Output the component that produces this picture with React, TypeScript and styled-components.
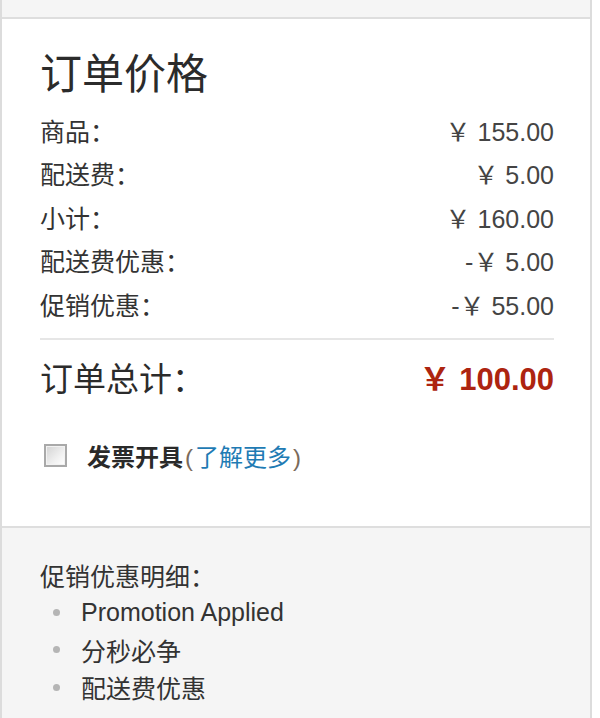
import React from "react";
import styled, { createGlobalStyle } from "styled-components";

const Global = createGlobalStyle`
  html, body { margin: 0; padding: 0; background: #fff; }
  body { font-family: "Liberation Sans", Arial, "Noto Sans CJK SC", sans-serif; color: #333; }
`;

const Frame = styled.div`
  width: 592px;
  box-sizing: border-box;
  border-left: 2px solid #dcdcdc;
  border-right: 2px solid #dcdcdc;
  min-height: 718px;
  background: #f5f5f5;
`;

const TopBand = styled.div`
  height: 17px;
  background: #f5f5f5;
  border-bottom: 2px solid #dedede;
`;

const PriceSection = styled.section`
  background: #fff;
  padding: 29px 36px 50px 38px;
  border-bottom: 2px solid #dedede;
`;

const Title = styled.h2`
  margin: 0 0 14px;
  font-family: "Noto Sans CJK SC", sans-serif;
  font-weight: 400;
  font-size: 42px;
  line-height: 46px;
  color: #2b2b2b;
`;

const Row = styled.div`
  display: flex;
  justify-content: space-between;
  align-items: center;
  height: 43.5px;
  font-size: 25px;
  color: #333;
`;

const Label = styled.span`
  font-family: "Noto Sans CJK SC", sans-serif;
`;

const Amount = styled.span<{ $red?: boolean }>`
  font-family: "Liberation Sans", Arial, "Noto Sans CJK SC", sans-serif;
  color: ${(p) => (p.$red ? "#ad2410" : "#444")};
  font-weight: ${(p) => (p.$red ? 700 : 400)};
  font-size: ${(p) => (p.$red ? "31px" : "25px")};
`;

const Divider = styled.hr`
  border: 0;
  border-top: 2px solid #e6e6e6;
  margin: 12px 0 0;
`;

const TotalRow = styled(Row)`
  height: 60px;
  margin-top: 7px;
  font-size: 33px;
`;

const TotalLabel = styled(Label)`
  color: #2b2b2b;
`;

const InvoiceRow = styled.label`
  display: flex;
  align-items: center;
  height: 40px;
  margin-top: 29px;
  padding-left: 4px;
  gap: 20px;
  font-family: "Noto Sans CJK SC", sans-serif;
  font-size: 24px;
`;

const CheckBox = styled.span`
  width: 23px;
  height: 23px;
  box-sizing: border-box;
  border: 2px solid #a9a9a9;
  background: linear-gradient(135deg, #d2d2d2 0%, #f0f0f0 60%, #ffffff 100%);
  box-shadow: inset 0 0 0 1px #f2f2f2;
`;

const InvoiceText = styled.span`
  font-weight: 700;
  color: #2a2a2a;
`;

const Paren = styled.span`
  font-weight: 400;
  color: #7a6a5a;
  font-family: "Liberation Sans", Arial, sans-serif;
  margin: 0 2px;
`;

const Link = styled.a`
  color: #1f7bb4;
  font-weight: 400;
  text-decoration: none;
`;

const PromoSection = styled.section`
  background: #f5f5f5;
  padding: 29px 38px 20px 38px;
`;

const PromoTitle = styled.div`
  font-family: "Noto Sans CJK SC", sans-serif;
  font-size: 25px;
  line-height: 37px;
  color: #333;
`;

const List = styled.ul`
  list-style: none;
  margin: 0;
  padding: 0;
`;

const Item = styled.li`
  display: flex;
  align-items: center;
  height: 37.5px;
  font-family: "Liberation Sans", Arial, "Noto Sans CJK SC", sans-serif;
  font-size: 25px;
  color: #333;
  &::before {
    content: "";
    width: 7px;
    height: 7px;
    border-radius: 50%;
    background: #b5b5b5;
    margin: 0 21px 0 13px;
  }
`;

const rows = [
  ["商品：", "￥ 155.00"],
  ["配送费：", "￥ 5.00"],
  ["小计：", "￥ 160.00"],
  ["配送费优惠：", "-￥ 5.00"],
  ["促销优惠：", "-￥ 55.00"],
];

const promos = ["Promotion Applied", "分秒必争", "配送费优惠"];

export default function App() {
  return (
    <>
      <Global />
      <Frame>
        <TopBand />
        <PriceSection>
          <Title>订单价格</Title>
          {rows.map(([l, v]) => (
            <Row key={l}>
              <Label>{l}</Label>
              <Amount>{v}</Amount>
            </Row>
          ))}
          <Divider />
          <TotalRow>
            <TotalLabel>订单总计：</TotalLabel>
            <Amount $red>￥ 100.00</Amount>
          </TotalRow>
          <InvoiceRow>
            <CheckBox />
            <span>
              <InvoiceText>发票开具</InvoiceText>
              <Paren>(</Paren>
              <Link href="#">了解更多</Link>
              <Paren>)</Paren>
            </span>
          </InvoiceRow>
        </PriceSection>
        <PromoSection>
          <PromoTitle>促销优惠明细：</PromoTitle>
          <List>
            {promos.map((p) => (
              <Item key={p}>{p}</Item>
            ))}
          </List>
        </PromoSection>
      </Frame>
    </>
  );
}
